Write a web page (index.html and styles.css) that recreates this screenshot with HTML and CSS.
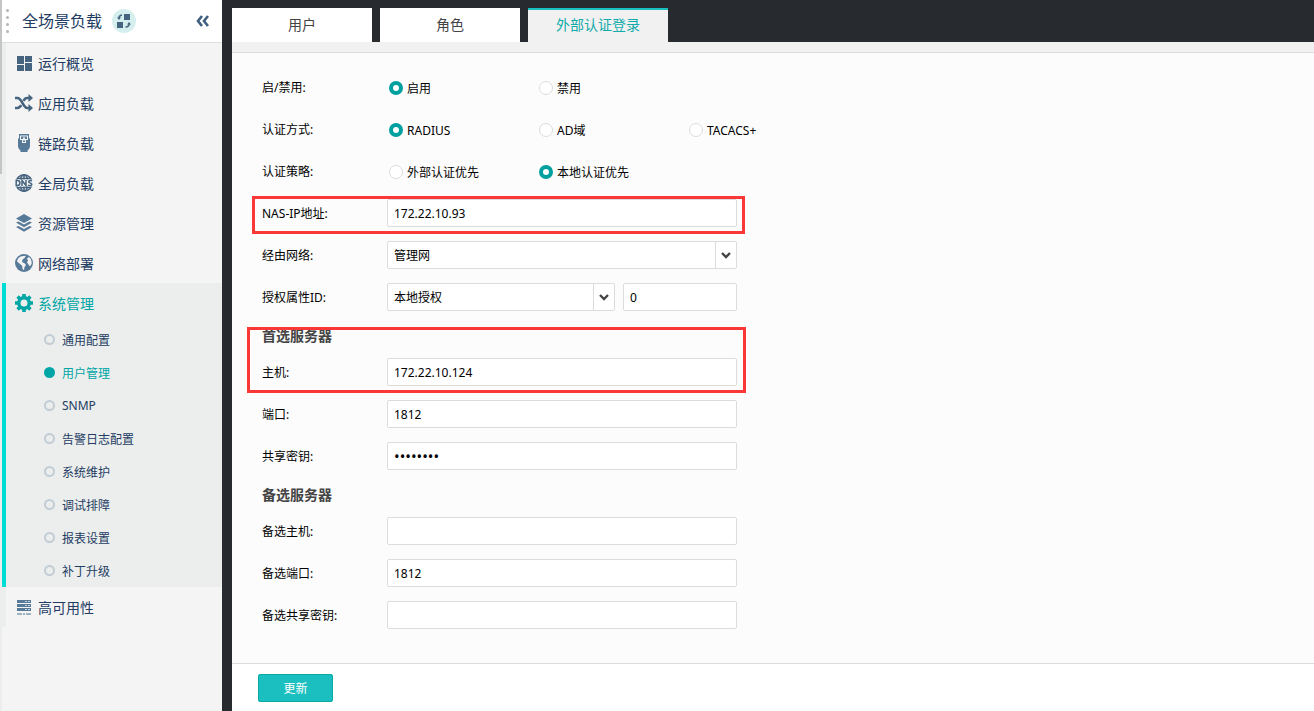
FILE: index.html
```html
<!DOCTYPE html>
<html lang="zh-CN">
<head>
  <meta charset="UTF-8">
  <title>外部认证登录</title>
  <meta name="viewport" content="width=device-width, initial-scale=1">
  <link rel="stylesheet" href="styles.css">
</head>
<body>

  <aside class="sidebar">
    <div class="scroll-thumb"></div>
    <header class="sidebar-header">
      <span class="grip"><i></i><i></i><i></i><i></i></span>
      <h1>全场景负载</h1>
      <button type="button" class="switch-btn" aria-label="切换场景">
        <svg width="14" height="14" viewBox="0 0 14 14">
          <path fill="#46647f" d="M7 0h6v6H7zM0 8h6v6H0z"/>
          <path fill="none" stroke="#46647f" stroke-width="1.6" d="M5 1C3 1.300 2 2.300 2 4M8.500 13c2.300 0 3.500-1 3.500-3"/>
          <path fill="#46647f" d="M0 3.500h4L2 6zM10 10.500h4L12 8z"/>
        </svg>
      </button>
      <button type="button" class="collapse-btn" aria-label="收起菜单">
        <svg width="13" height="12" viewBox="0 0 13 12" fill="none" stroke="#3f5f80" stroke-width="2.600">
          <path d="M6 1L2 6l4 5M12 1L8 6l4 5"/>
        </svg>
      </button>
    </header>

    <nav>
      <ul class="menu">
        <li>
          <a href="#">
            <svg viewBox="0 0 18 18" fill="#46647f"><path d="M2 2h7v8H2zM10 2h7v6h-7zM2 11h7v6H2zM10 9h7v8h-7z"/></svg>
            运行概览
          </a>
        </li>
        <li>
          <a href="#">
            <svg viewBox="0 0 18 18" fill="none" stroke="#46647f" stroke-width="2.600">
              <path d="M0 4h2.500C7 4 8 14 12 14h3M0 14h2.500c1.800 0 2.800-1.200 3.700-2.800M8.500 6.800C9.500 5 10.500 4 12 4h3"/>
              <path fill="#46647f" stroke="none" d="M13.500 0L18 4l-4.500 4zM13.500 10l4.500 4-4.500 4z"/>
            </svg>
            应用负载
          </a>
        </li>
        <li>
          <a href="#">
            <svg viewBox="0 0 18 18">
              <path fill="#587a99" d="M4 0h10v4.500h1V12c0 2-1 3-2.500 4.500V18h-7v-1.500C4 15 3 14 3 12V4.500h1z"/>
              <path fill="#f4f4f4" d="M5 1.500h8V6h-2v3H7V6H5z"/>
              <path fill="#587a99" d="M6 2.500h6V5h-2v3H8V5H6z"/>
              <path fill="#f4f4f4" d="M8 3.500h2v3H8z"/>
            </svg>
            链路负载
          </a>
        </li>
        <li>
          <a href="#">
            <svg viewBox="0 0 18 18">
              <g fill="none" stroke="#46647f" stroke-width="1.600">
                <circle cx="9" cy="9" r="8.200"/>
                <ellipse cx="9" cy="9" rx="4" ry="8.200"/>
                <path d="M9 0v18M2 4.500h14M2 13.500h14"/>
              </g>
              <path fill="#f4f4f4" d="M0 5.500h18v7H0z"/>
              <g fill="none" stroke="#46647f" stroke-width="1.500">
                <path d="M1.200 6.500v5h1.300q2.400 0 2.400-2.500T2.500 6.500zM7 12V6.500l4 5V6M17 6.800c-3-1-4.300.9-2.500 1.800l1.500.8c2 1.200 0 3-3 1.800"/>
              </g>
            </svg>
            全局负载
          </a>
        </li>
        <li>
          <a href="#">
            <svg viewBox="0 0 18 18" fill="#587a99">
              <path d="M9 0l8 4.500L9 9 1 4.500z"/>
              <path d="M1 8.500l2.500-1L9 10.500l5.500-3 2.500 1L9 13.300z"/>
              <path d="M1 13l2.500-1L9 15l5.500-3 2.500 1-8 4.800z"/>
            </svg>
            资源管理
          </a>
        </li>
        <li>
          <a href="#">
            <svg viewBox="0 0 18 18">
              <circle cx="9" cy="9" r="9" fill="#587a99"/>
              <path fill="#f4f4f4" d="M6.500 2.200L11 1.800 9.500 4 7.500 5.500 7 8l2.500 1.200L11 11l-1.500 2-.5 3.300L7.500 15l-.3-3L4.500 9.500 2 7.500C2.300 5 4 3 6.500 2.200zM12 4.500l2-1.500c1.800 1.500 2.800 3.500 2.700 6.500L15 12.500l-1.500-2L12 8.500l1-2z"/>
            </svg>
            网络部署
          </a>
        </li>
        <li class="active">
          <a href="#">
            <svg viewBox="0 0 18 18">
              <path fill="none" stroke="#00a6a6" stroke-width="3.600" d="M9 0v4M9 14v4M0 9h4M14 9h4M2.600 2.600l3 3M12.400 12.400l3 3M15.400 2.600l-3 3M5.600 12.400l-3 3"/>
              <circle cx="9" cy="9" r="5.200" fill="#eceeed" stroke="#00a6a6" stroke-width="3.400"/>
            </svg>
            系统管理
          </a>
          <ul class="submenu">
            <li><a href="#">通用配置</a></li>
            <li><a href="#" class="current">用户管理</a></li>
            <li><a href="#">SNMP</a></li>
            <li><a href="#">告警日志配置</a></li>
            <li><a href="#">系统维护</a></li>
            <li><a href="#">调试排障</a></li>
            <li><a href="#">报表设置</a></li>
            <li><a href="#">补丁升级</a></li>
          </ul>
        </li>
        <li>
          <a href="#">
            <svg viewBox="0 0 18 18">
              <path fill="#587a99" d="M2 2h14v3H2zM2 6h14v3H2zM2 10h14v3H2z"/>
              <path fill="#c3d0db" d="M10 3h2v1h-2zM13 3h2v1h-2zM10 7h2v1h-2zM13 7h2v1h-2zM10 11h2v1h-2zM13 11h2v1h-2z"/>
              <path fill="#9fb2c2" d="M2 15h5v2H2zM8 15h2v2H8zM11 15h5v2h-5z"/>
            </svg>
            高可用性
          </a>
        </li>
      </ul>
    </nav>
  </aside>

  <main class="content">
    <nav class="tabs">
      <a href="#">用户</a>
      <a href="#">角色</a>
      <a href="#" class="selected">外部认证登录</a>
    </nav>

    <form class="auth-form">
      <div class="fields">
        <div class="row" role="radiogroup" aria-labelledby="lblEnable">
          <span class="row-label" id="lblEnable">启/禁用:</span>
          <div class="radios">
            <label><input type="radio" name="enable" checked>启用</label>
            <label><input type="radio" name="enable">禁用</label>
          </div>
        </div>

        <div class="row" role="radiogroup" aria-labelledby="lblMethod">
          <span class="row-label" id="lblMethod">认证方式:</span>
          <div class="radios">
            <label><input type="radio" name="method" checked>RADIUS</label>
            <label><input type="radio" name="method">AD域</label>
            <label><input type="radio" name="method">TACACS+</label>
          </div>
        </div>

        <div class="row" role="radiogroup" aria-labelledby="lblPolicy">
          <span class="row-label" id="lblPolicy">认证策略:</span>
          <div class="radios">
            <label><input type="radio" name="policy">外部认证优先</label>
            <label><input type="radio" name="policy" checked>本地认证优先</label>
          </div>
        </div>

        <div class="row marked">
          <label class="row-label" for="nasIp">NAS-IP地址:</label>
          <input class="text" type="text" id="nasIp" value="172.22.10.93">
        </div>

        <div class="row">
          <label class="row-label" for="network">经由网络:</label>
          <div class="select">
            <select id="network"><option>管理网</option></select>
            <span class="arrow"><svg width="10" height="7" viewBox="0 0 10 7"><path d="M1 1l4 4 4-4" fill="none" stroke="#444" stroke-width="2.400"/></svg></span>
          </div>
        </div>

        <div class="row">
          <label class="row-label" for="attr">授权属性ID:</label>
          <div class="pair">
            <div class="select">
              <select id="attr"><option>本地授权</option></select>
              <span class="arrow"><svg width="10" height="7" viewBox="0 0 10 7"><path d="M1 1l4 4 4-4" fill="none" stroke="#444" stroke-width="2.400"/></svg></span>
            </div>
            <input class="text" type="text" value="0" aria-label="属性ID">
          </div>
        </div>

        <div class="server-host marked">
          <h2>首选服务器</h2>
          <div class="row">
            <label class="row-label" for="host">主机:</label>
            <input class="text" type="text" id="host" value="172.22.10.124">
          </div>
        </div>

        <div class="row">
          <label class="row-label" for="port">端口:</label>
          <input class="text" type="text" id="port" value="1812">
        </div>

        <div class="row">
          <label class="row-label" for="secret">共享密钥:</label>
          <input class="text password" type="password" id="secret" value="12345678">
        </div>

        <h2>备选服务器</h2>

        <div class="row">
          <label class="row-label" for="host2">备选主机:</label>
          <input class="text" type="text" id="host2">
        </div>

        <div class="row">
          <label class="row-label" for="port2">备选端口:</label>
          <input class="text" type="text" id="port2" value="1812">
        </div>

        <div class="row">
          <label class="row-label" for="secret2">备选共享密钥:</label>
          <input class="text password" type="password" id="secret2">
        </div>
      </div>

      <footer class="form-footer">
        <button type="button" class="submit">更新</button>
      </footer>
    </form>
  </main>

</body>
</html>
```
FILE: styles.css
```css
*,
*::before,
*::after {
  margin: 0;
  padding: 0;
  box-sizing: border-box;
}

body {
  display: flex;
  min-height: 100vh;
  background: #272b2f;
  color: #000;
  font-family: "Noto Sans", "Noto Sans CJK SC", sans-serif;
  font-size: 12px;
}

a {
  color: inherit;
  text-decoration: none;
}

ul {
  list-style: none;
}

button,
input,
select {
  font: inherit;
  color: inherit;
}

/* sidebar */
.sidebar {
  position: relative;
  flex: 0 0 222px;
  padding-left: 2px;
  background: linear-gradient(to right, #eceeed 2px, #f4f4f4 2px);
  color: #233c63;
}

.scroll-thumb {
  position: absolute;
  top: 0;
  left: 0;
  width: 2px;
  height: 174px;
  background: #c4c5c5;
}

.sidebar-header {
  display: flex;
  align-items: center;
  height: 43px;
  padding: 0 13px 0 4px;
  background: #fff;
  border-bottom: 1px solid #dedede;
}

.grip {
  display: flex;
  flex-direction: column;
  gap: 4px;
  width: 16px;
}

.grip i {
  width: 3px;
  height: 3px;
  border-radius: 50%;
  background: #b5b5b5;
}

.sidebar-header h1 {
  font-size: 16px;
  font-weight: normal;
  line-height: 24px;
}

.switch-btn,
.collapse-btn {
  display: flex;
  align-items: center;
  justify-content: center;
  border: none;
  background: none;
  cursor: pointer;
}

.switch-btn {
  width: 24px;
  height: 24px;
  margin-left: 10px;
  border-radius: 50%;
  background: #d5efee;
}

.collapse-btn {
  margin-left: auto;
}

.menu > li {
  border-left: 4px solid #eceeed;
}

.menu > li > a {
  display: flex;
  align-items: center;
  gap: 5px;
  height: 40px;
  padding-left: 9px;
  font-size: 14px;
}

.menu svg {
  width: 18px;
  height: 18px;
}

.menu > .active {
  border-left-color: #00dcd6;
  background: #eceeed;
}

.menu > .active > a,
.submenu .current {
  color: #00a6a6;
}

.submenu a {
  display: flex;
  align-items: center;
  gap: 7px;
  height: 33px;
  padding-left: 38px;
}

.submenu a::before {
  content: "";
  width: 11px;
  height: 11px;
  border: 2px solid #c1ccd5;
  border-radius: 50%;
}

.submenu .current::before {
  border-color: #00a6a6;
  background: #00a6a6;
}

/* content */
.content {
  display: flex;
  flex: 1;
  flex-direction: column;
  min-width: 0;
  margin-left: 10px;
}

.tabs {
  display: flex;
  gap: 8px;
  padding-top: 8px;
}

.tabs a {
  width: 140px;
  height: 34px;
  background: #fff;
  color: #444;
  font-size: 14px;
  line-height: 34px;
  text-align: center;
}

.tabs .selected {
  border-top: 2px solid #19bfbf;
  background: #f1f1f1;
  color: #12aaaa;
  line-height: 30px;
}

.auth-form {
  display: flex;
  flex: 1;
  flex-direction: column;
  border-top: 10px solid #f1f1f1;
  background: #fcfcfc;
}

.fields {
  flex: 1;
  padding: 20px 30px;
  border-top: 1px solid #dcdcdc;
}

.row {
  display: flex;
  align-items: center;
  max-width: 475px;
  height: 28px;
  margin-bottom: 14px;
}

.row-label {
  flex: 0 0 125px;
}

.radios {
  display: flex;
  padding: 2px 0 0 2px;
}

.radios label {
  display: flex;
  flex: 0 0 150px;
  align-items: center;
  gap: 4px;
}

.radios input {
  appearance: none;
  width: 14px;
  height: 14px;
  border: 1px solid #dcdcdc;
  border-radius: 50%;
  background: #fff;
}

.radios input:checked {
  border: 4px solid #00a0a0;
}

.text,
.select {
  flex: 1;
  min-width: 0;
  height: 28px;
  border: 1px solid #dcdcdc;
  border-radius: 2px;
  background: #fff;
}

.text {
  padding: 0 6px;
}

.password {
  font-size: 15px;
}

.select {
  display: grid;
  grid-template-columns: 1fr 21px;
}

.select select {
  grid-area: 1 / 1 / 2 / 3;
  appearance: none;
  padding: 0 28px 0 6px;
  border: none;
  background: none;
}

.arrow {
  grid-area: 1 / 2;
  display: flex;
  align-items: center;
  justify-content: center;
  border-left: 1px solid #dcdcdc;
  pointer-events: none;
}

.pair {
  display: grid;
  flex: 1;
  grid-template-columns: 2fr 1fr;
  gap: 8px;
}

h2 {
  margin-bottom: 11px;
  color: #444;
  font-size: 14px;
  line-height: 22px;
}

.server-host {
  max-width: 475px;
  margin-bottom: 14px;
}

.server-host .row {
  margin-bottom: 0;
}

/* red frame around the settings to check */
.marked {
  position: relative;
}

.marked::after {
  content: "";
  position: absolute;
  inset: -3px -8px -7px -10px;
  border: 3px solid #fb3838;
  pointer-events: none;
}

.server-host.marked::after {
  inset: 2px -9px -7px -15px;
}

.form-footer {
  padding: 10px 26px 9px;
  border-top: 1px solid #dcdcdc;
  background: #fff;
}

.submit {
  display: block;
  width: 75px;
  height: 28px;
  border: 1px solid #0aa8a8;
  border-radius: 2px;
  background: #1bbfbf;
  color: #fff;
  cursor: pointer;
}
```
